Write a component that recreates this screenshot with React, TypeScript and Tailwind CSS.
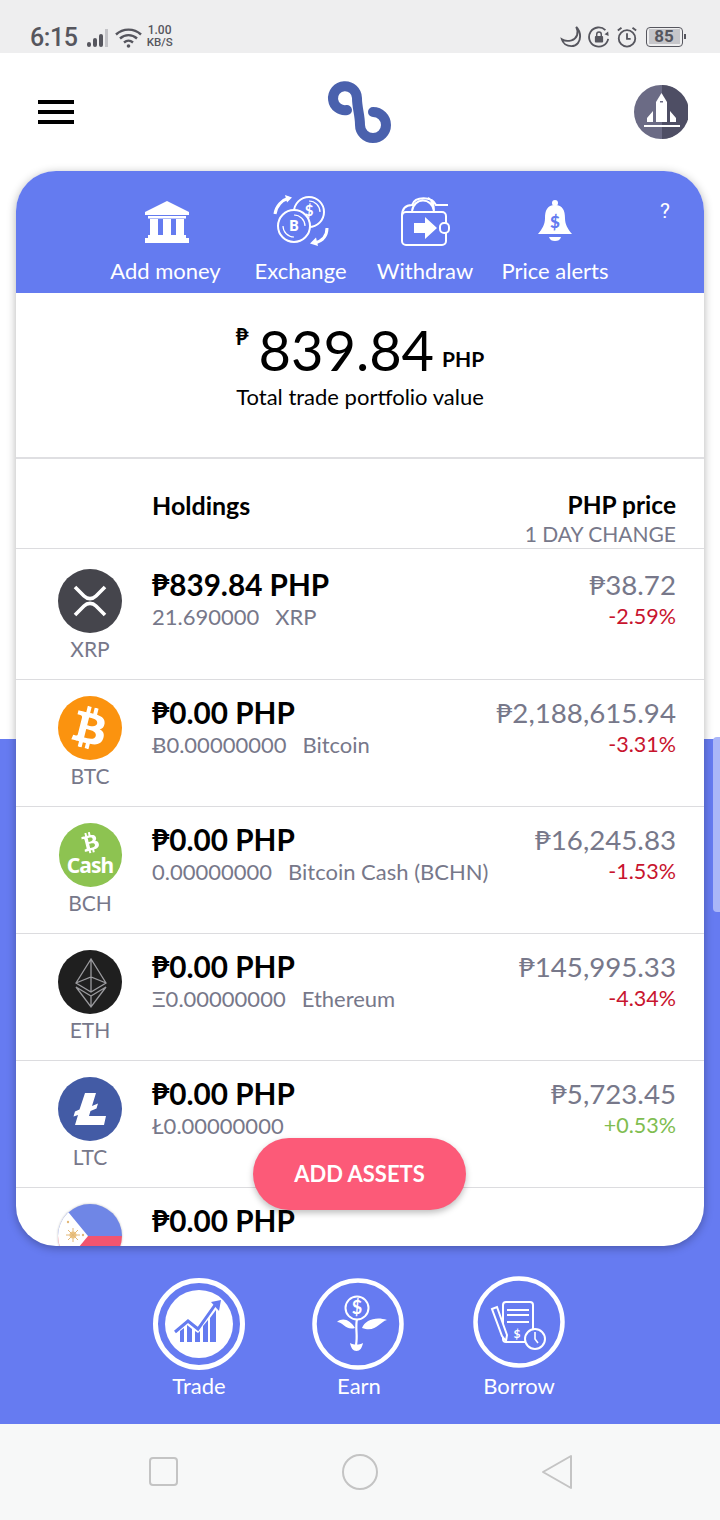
import { FaBtc } from 'react-icons/fa';

const holdings = [
  { sym: 'XRP', total: '₱839.84 PHP', amount: '21.690000', name: 'XRP', price: '₱38.72', change: '-2.59%', first: true },
  { sym: 'BTC', total: '₱0.00 PHP', amount: 'Ƀ0.00000000', name: 'Bitcoin', price: '₱2,188,615.94', change: '-3.31%' },
  { sym: 'BCH', total: '₱0.00 PHP', amount: '0.00000000', name: 'Bitcoin Cash (BCHN)', price: '₱16,245.83', change: '-1.53%' },
  { sym: 'ETH', total: '₱0.00 PHP', amount: 'Ξ0.00000000', name: 'Ethereum', price: '₱145,995.33', change: '-4.34%' },
  { sym: 'LTC', total: '₱0.00 PHP', amount: 'Ł0.00000000', name: '', price: '₱5,723.45', change: '+0.53%' },
];

const StatusBar = () => (
  <div className="flex h-[53px] items-end justify-between bg-[#eeeeef] pl-[30px] pr-[34px] font-[Roboto,sans-serif] text-[#56565e]">
    <div className="flex items-center">
      <span className="text-[25px] font-medium leading-[30px] tracking-[-0.4px]">6:15</span>
      <svg width="24" height="20" viewBox="0 0 24 20" className="ml-[8px]" fill="currentColor">
        <rect x="1" y="14" width="4" height="5" rx="2" />
        <rect x="7" y="10" width="4" height="9" rx="2" />
        <rect x="13" y="6" width="4" height="13" rx="2" />
        <rect x="19" y="1" width="3" height="18" fill="#c4c4c8" />
      </svg>
      <svg width="30" height="24" viewBox="0 0 30 24" className="ml-[4px]" fill="none" stroke="currentColor" strokeWidth="2.400">
        <path d="M2 8.500C9 2 20 2 27 8.500" />
        <path d="M6 12.500c5-4.500 12-4.500 17 0" />
        <path d="M10 16.500c3-2.500 6-2.500 9 0" />
        <circle cx="14.500" cy="20" r="1.800" fill="currentColor" stroke="none" />
      </svg>
      <div className="mb-[4px] ml-[3px] flex flex-col items-center text-[11.500px] font-medium leading-[12px]">
        <span className="text-[12px]">1.00</span>
        <span>KB/S</span>
      </div>
    </div>
    <div className="mb-[5px] flex items-center gap-[6px]">
      <svg width="23" height="23" viewBox="0 0 24 24" fill="none" stroke="currentColor" strokeWidth="2">
        <path d="M18 2c3 6 1 12-5 14-4 1-7 1-10-1 1 4 5 7 10 7 6 0 9-5 9-10 0-4-2-8-4-10z" />
      </svg>
      <svg width="22" height="22" viewBox="0 0 24 24" fill="none" stroke="currentColor" strokeWidth="2">
        <path d="M22 14A10.500 10.500 0 1 1 19 4.500" />
        <path d="M22 6l.5 5-4.500-2z" fill="currentColor" stroke="none" />
        <rect x="7.500" y="11" width="9" height="7" rx="1" fill="currentColor" stroke="none" />
        <path d="M9.500 11V9a2.500 2.500 0 0 1 5 0v2" strokeWidth="1.600" />
      </svg>
      <svg width="22" height="22" viewBox="0 0 24 24" fill="none" stroke="currentColor" strokeWidth="2">
        <circle cx="12" cy="13.500" r="9" />
        <path d="M12 8v6h4" />
        <path d="M2 5l4-3M22 5l-4-3" />
      </svg>
      <div className="ml-[2px] flex items-center">
        <div className="flex h-[20px] w-[37px] items-center rounded-[4px] border border-[#56565e] p-[1.500px]">
          <div className="flex h-full w-[31px] items-center justify-center bg-[#c6c6ca] text-[17px] font-bold leading-none">
            85
          </div>
        </div>
        <div className="ml-[1px] h-[5px] w-[2px] bg-[#56565e]" />
      </div>
    </div>
  </div>
);

const Logo = () => (
  <svg width="80" height="80" viewBox="0 0 80 80" fill="none" stroke="#4a61ad" strokeWidth="10" strokeLinecap="round">
    <path d="M27 38A12 12 0 1 1 37 26C37 36 40 43 40 53A13 13 0 1 0 53 40" />
  </svg>
);

const Avatar = () => (
  <svg width="54" height="54" viewBox="0 0 54 54">
    <circle cx="27" cy="27" r="27" fill="#6b6b85" />
    <path d="M28 0a27 27 0 0 1 0 54z" fill="#4e4e64" />
    <path d="M27.500 8l5.500 9v20H22V17z" fill="#fff" />
    <path d="M19 26v11h-6v-4zM36 26v11h6v-4z" fill="#fff" />
    <rect x="10" y="40" width="36" height="2" fill="#fff" />
    <rect x="26" y="16" width="3" height="1.500" fill="#6b6b85" />
  </svg>
);

const TopBar = () => (
  <div className="grid h-[118px] grid-cols-[1fr_80px_1fr] items-center">
    <div className="ml-[38px] flex w-[36px] flex-col gap-[6px]">
      <div className="h-[4px] bg-black" />
      <div className="h-[4px] bg-black" />
      <div className="h-[4px] bg-black" />
    </div>
    <Logo />
    <div className="mr-[32px] justify-self-end">
      <Avatar />
    </div>
  </div>
);

const BankIcon = () => (
  <svg width="46" height="42" viewBox="0 0 46 42" fill="#fff" className="ml-[3px] mt-[2px]">
    <path d="M23 0l22 11v3H1v-3z" />
    <rect x="4" y="15" width="38" height="2.500" />
    <rect x="6" y="18" width="8" height="16" />
    <rect x="19" y="18" width="8" height="16" />
    <rect x="32" y="18" width="8" height="16" />
    <rect x="4" y="34" width="38" height="3" />
    <rect x="1" y="37" width="44" height="5" />
  </svg>
);

const ExchangeIcon = () => (
  <svg width="56" height="52" viewBox="0 0 56 52" fill="none" stroke="#fff" strokeWidth="2">
    <circle cx="36" cy="17" r="15" />
    <path d="M36 6a11 11 0 0 1 11 11" strokeWidth="1.200" />
    <circle cx="21" cy="31" r="16" fill="#647bf0" />
    <path d="M10 31a11 11 0 0 0 11 11M32 31a11 11 0 0 0-11-11" strokeWidth="1.200" />
    <text x="36" y="21" fontSize="15" fontWeight="700" fill="#fff" stroke="none" textAnchor="middle" fontFamily="Lato, sans-serif">$</text>
    <text x="21" y="36" fontSize="14" fontWeight="800" fill="#fff" stroke="none" textAnchor="middle" fontFamily="Lato, sans-serif">B</text>
    <path d="M2 19C3 11 9 5 16 3" strokeWidth="3" />
    <path d="M12 0l7 2.500-5 5z" fill="#fff" stroke="none" />
    <path d="M54 33c0 8-5 13-12 15" strokeWidth="3" />
    <path d="M45 51l-8-2.500 6-6z" fill="#fff" stroke="none" />
  </svg>
);

const WalletIcon = () => (
  <svg width="50" height="50" viewBox="0 0 50 50" fill="none" stroke="#fff" strokeWidth="2">
    <rect x="2" y="16" width="44" height="33" rx="4" />
    <path d="M2 20C2 10 8 9 12 9c3-9 20-9 24 0h12M12 15c2-14 20-14 22 0M28 2c4 2 6 7 6 13" />
    <path d="M14 27h11v-6l12 11-12 11v-6H14z" fill="#fff" stroke="none" />
    <rect x="40" y="27" width="9" height="10" rx="4" fill="#647bf0" />
  </svg>
);

const BellIcon = () => (
  <svg width="36" height="44" viewBox="0 0 36 44" fill="#fff" className="mt-[2px]">
    <circle cx="18" cy="3" r="3" />
    <path d="M18 5c-8 0-10 6-10 13 0 7-3 11-7 16h34c-4-5-7-9-7-16 0-7-2-13-10-13z" />
    <path d="M12 37h12c-1 3-3 4-6 4s-5-1-6-4z" />
    <text x="18" y="28" fontSize="17" fontWeight="900" fill="#647bf0" textAnchor="middle" fontFamily="Lato, sans-serif">$</text>
  </svg>
);

const actions = [
  { label: 'Add money', width: 'w-[111px]', icon: <BankIcon /> },
  { label: 'Exchange', width: 'w-[95px]', icon: <ExchangeIcon /> },
  { label: 'Withdraw', width: 'w-[90px]', icon: <WalletIcon /> },
  { label: 'Price alerts', width: 'w-[106px]', icon: <BellIcon /> },
];

const CoinIcon = ({ sym }: { sym: string }) => {
  if (sym === 'XRP') {
    return (
      <svg width="64" height="64" viewBox="0 0 64 64">
        <circle cx="32" cy="32" r="32" fill="#45454c" />
        <path d="M17 18l9 9c3.500 3.500 8.500 3.500 12 0l9-9M17 46l9-9c3.500-3.500 8.500-3.500 12 0l9 9" fill="none" stroke="#fff" strokeWidth="3.600" />
      </svg>
    );
  }
  if (sym === 'BTC') {
    return (
      <div className="flex h-[64px] w-[64px] items-center justify-center rounded-full bg-[#fb930f] text-white">
        <FaBtc size={42} className="rotate-[14deg]" />
      </div>
    );
  }
  if (sym === 'BCH') {
    return (
      <div className="flex h-[64px] w-[63px] flex-col items-center rounded-full bg-[#8dc351] pt-[9px] text-white">
        <FaBtc size={21} className="-rotate-[14deg]" />
        <span className="font-[Noto_Sans,sans-serif] text-[21px] font-bold leading-[24px] tracking-[-1px]">Cash</span>
      </div>
    );
  }
  if (sym === 'ETH') {
    return (
      <svg width="64" height="64" viewBox="0 0 64 64">
        <circle cx="32" cy="32" r="32" fill="#1f1f1f" />
        <path d="M33 9L18 33l15 9 15-9zM18 33l15-6 15 6M33 9v33M18 37l15 20 15-20-15 9zM33 46v11" fill="none" stroke="#9a9a9e" strokeWidth="1.300" />
      </svg>
    );
  }
  return (
    <svg width="64" height="64" viewBox="0 0 64 64">
      <circle cx="32" cy="32" r="32" fill="#435ba5" />
      <path d="M27 16h11l-4 13 6-2.500-1.500 5-6 2.500-1.500 5h17l-2 9H17l3-10-4.500 1.500 1.500-5 4.500-2z" fill="#fff" />
    </svg>
  );
};

const FlagIcon = () => (
  <svg width="64" height="64" viewBox="0 0 64 64" className="drop-shadow-[0_0_1px_rgba(0,0,0,0.25)]">
    <defs>
      <clipPath id="flag">
        <circle cx="32" cy="32" r="32" />
      </clipPath>
    </defs>
    <g clipPath="url(#flag)">
      <rect width="64" height="32" fill="#6f86e6" />
      <rect y="32" width="64" height="32" fill="#f2556f" />
      <path d="M-3-8L30 32-3 72z" fill="#fff" />
      <circle cx="15" cy="31" r="3.500" fill="#f0c98a" />
      <path d="M15 24v14M8 31h14M10 26l10 10M20 26L10 36" stroke="#e2b878" strokeWidth="1" />
      <circle cx="10" cy="18" r="1.200" fill="#e2b878" />
      <circle cx="25" cy="31" r="1.200" fill="#e2b878" />
    </g>
  </svg>
);

const AppRow = ({ row }: { row: (typeof holdings)[number] }) => (
  <div className={`flex shrink-0 border-b border-[#dcdcdf] pl-[42px] pr-[28px] ${row.first ? 'h-[131px] pt-[20px]' : 'h-[127px] pt-[16px]'}`}>
    <div className="flex w-[64px] shrink-0 flex-col items-center">
      <CoinIcon sym={row.sym} />
      <span className="mt-[3px] text-[21px] leading-[26px] text-[#77788a]">{row.sym}</span>
    </div>
    <div className={`ml-[30px] ${row.first ? '-mt-[2px]' : '-mt-[1px]'}`}>
      <div className="text-[29.700px] font-bold leading-[36px] text-black">{row.total}</div>
      <div className="flex gap-[16px] text-[22px] leading-[28px] text-[#77788a]">
        <span>{row.amount}</span>
        {row.name && <span>{row.name}</span>}
      </div>
    </div>
    <div className={`ml-auto text-right ${row.first ? '-mt-[2px]' : '-mt-[1px]'}`}>
      <div className="text-[27.700px] leading-[36px] text-[#77788a]">{row.price}</div>
      <div className={`text-[21.500px] leading-[26px] ${row.change.startsWith('+') ? 'text-[#80bd50]' : 'text-[#c8142e]'}`}>
        {row.change}
      </div>
    </div>
  </div>
);

const TradeIcon = () => (
  <svg width="92" height="92" viewBox="0 0 92 92" fill="none">
    <circle cx="46" cy="46" r="43.500" stroke="#fff" strokeWidth="5" />
    <circle cx="46" cy="46" r="34" fill="#fff" />
    <path d="M22 54l13-11 10 8 17-24" stroke="#647bf0" strokeWidth="3" />
    <path d="M58 24l10-2-2 11z" fill="#647bf0" />
    <path d="M27 64V53l4-3v14zM34 64V47l5 4v13zM42 64V53l3 2 2-2v11zM50 64V48l5-6v22zM57 64V40l6-8v32z" fill="#647bf0" />
  </svg>
);

const EarnIcon = () => (
  <svg width="92" height="92" viewBox="1 0 92 92" fill="none" stroke="#fff" className="overflow-visible">
    <circle cx="46" cy="46" r="43.500" strokeWidth="4.500" />
    <circle cx="45" cy="30" r="11.500" strokeWidth="2" />
    <text x="45" y="36" fontSize="18" fontWeight="700" fill="#fff" stroke="none" textAnchor="middle" fontFamily="Lato, sans-serif">$</text>
    <path d="M45 41c-2 9 1 16-1 26" strokeWidth="2.200" />
    <path d="M43 50C38 42 31 39 25 44c6 0 9 9 18 6zM50 50c3-8 14-12 25-8-8 2-11 13-25 8z" fill="#fff" stroke="none" />
    <path d="M38 65c4 2 9 2 13 0-1 5-3 8-6.500 8s-5.500-3-6.500-8z" fill="#fff" stroke="none" />
  </svg>
);

const BorrowIcon = () => (
  <svg width="92" height="92" viewBox="0 2 92 92" fill="none" stroke="#fff" className="overflow-visible">
    <circle cx="46" cy="46" r="43.500" strokeWidth="4.500" />
    <rect x="30" y="26" width="30" height="40" rx="3" strokeWidth="2" />
    <path d="M34 34h22M34 39h22M34 46h22" strokeWidth="2.200" />
    <path d="M19 33l5-2 10 28-1 6-4-5z" fill="#647bf0" strokeWidth="2" />
    <circle cx="62" cy="63" r="10" fill="#647bf0" strokeWidth="2" />
    <path d="M62 56v7l3 4" strokeWidth="1.600" />
    <text x="44" y="62" fontSize="12" fontWeight="700" fill="#fff" stroke="none" textAnchor="middle" fontFamily="Lato, sans-serif">$</text>
  </svg>
);

const products = [
  { label: 'Trade', icon: <TradeIcon /> },
  { label: 'Earn', icon: <EarnIcon /> },
  { label: 'Borrow', icon: <BorrowIcon /> },
];

export default function App() {
  return (
    <div className="relative flex h-[1520px] w-[720px] flex-col overflow-hidden bg-white font-[Lato,'DejaVu_Sans',sans-serif]">
      <StatusBar />

      <main className="flex h-[1371px] flex-col bg-[linear-gradient(to_bottom,#ffffff_686px,#667bf1_686px)]">
        <TopBar />

        {/* Portfolio card */}
        <section className="relative mx-[16px] flex h-[1075px] flex-col overflow-hidden rounded-[40px] bg-white shadow-[0_2px_10px_rgba(0,0,0,0.3)]">
          <div className="relative flex h-[122px] shrink-0 items-end justify-start gap-[32px] bg-[#647bf0] pb-[8px] pl-[94px]">
            {actions.map((action) => (
              <div key={action.label} className={`flex flex-col items-center ${action.width}`}>
                <div className="flex h-[52px] items-center">{action.icon}</div>
                <span className="mt-[10px] whitespace-nowrap text-[22px] leading-[28px] text-white">{action.label}</span>
              </div>
            ))}
            <span className="absolute right-[34px] top-[27px] font-[Roboto,sans-serif] text-[21px] leading-[26px] text-white">?</span>
          </div>

          {/* Total value */}
          <div className="flex h-[166px] shrink-0 flex-col items-center border-b-2 border-[#dfdfe2] pt-[23px]">
            <div className="flex items-baseline text-black">
              <span className="mr-[10px] self-start pt-[9px] text-[22px] font-bold leading-[24px]">₱</span>
              <span className="text-[56px] leading-[68px]">839.84</span>
              <span className="ml-[8px] -translate-y-[4px] text-[21px] font-bold leading-[24px]">PHP</span>
            </div>
            <span className="-mt-[1px] text-[22px] leading-[28px] text-black">Total trade portfolio value</span>
          </div>

          {/* Table header */}
          <div className="flex h-[90px] shrink-0 justify-between border-b border-[#dcdcdf] pl-[136px] pr-[28px] pt-[31px]">
            <span className="text-[25px] font-bold leading-[30px] text-black">Holdings</span>
            <div className="flex flex-col items-end">
              <span className="text-[24.500px] font-bold leading-[30px] text-black">PHP price</span>
              <span className="text-[21px] leading-[28px] text-[#77788a]">1 DAY CHANGE</span>
            </div>
          </div>

          {holdings.map((row) => (
            <AppRow key={row.sym} row={row} />
          ))}

          <div className="flex shrink-0 pl-[42px] pt-[16px]">
            <FlagIcon />
            <span className="-mt-[1px] ml-[30px] text-[29.700px] font-bold leading-[36px] text-black">₱0.00 PHP</span>
          </div>

          <button
            type="button"
            className="absolute bottom-[36px] left-[237px] flex h-[72px] w-[213px] items-center justify-center rounded-full bg-[#fc5a78] pb-[2px] text-[22px] font-bold text-white shadow-[0_3px_6px_rgba(0,0,0,0.25)]"
          >
            ADD ASSETS
          </button>
        </section>

        {/* Products */}
        <div className="grid flex-1 grid-cols-[160px_160px_160px] justify-center pr-[2px] pt-[32px]">
          {products.map((product) => (
            <div key={product.label} className="flex flex-col items-center">
              {product.icon}
              <span className="mt-[3px] text-[22px] leading-[26px] text-white">{product.label}</span>
            </div>
          ))}
        </div>
      </main>

      {/* Android nav bar */}
      <div className="flex h-[96px] items-center justify-between bg-[#f7f8f8] pb-[1px] pl-[149px] pr-[147px]">
        <div className="h-[29px] w-[29px] rounded-[4px] border-2 border-[#c4c4c4]" />
        <div className="h-[36px] w-[36px] rounded-full border-2 border-[#c4c4c4]" />
        <svg width="32" height="36" viewBox="0 0 32 36" fill="none" stroke="#c4c4c4" strokeWidth="2" strokeLinejoin="round">
          <path d="M2 18L30 2v32z" />
        </svg>
      </div>

      {/* Scrollbar thumb */}
      <div className="absolute right-0 top-[737px] h-[175px] w-[7px] rounded-l-[4px] bg-[#aab6f8]" />
    </div>
  );
}
